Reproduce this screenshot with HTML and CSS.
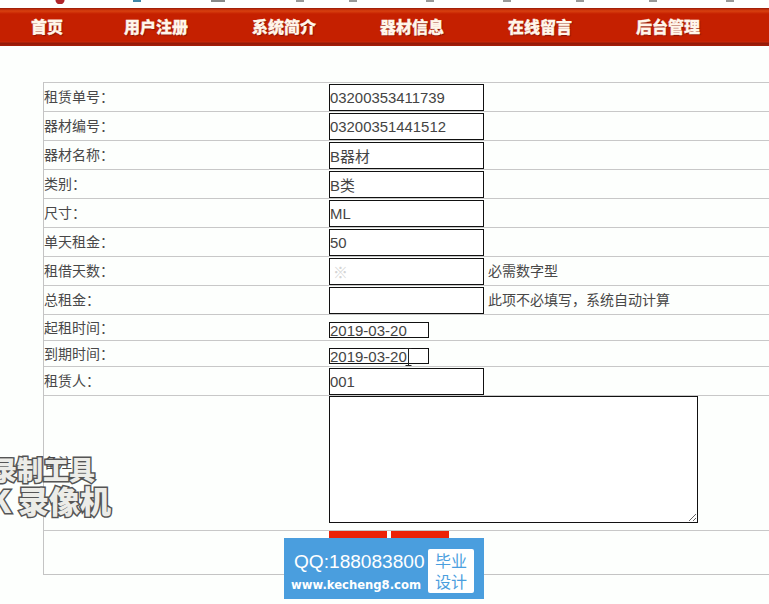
FILE: index.html
```html
<!DOCTYPE html>
<html lang="zh-CN">
<head>
<meta charset="utf-8">
<title>租赁信息</title>
<link rel="stylesheet" href="styles.css">
</head>
<body>
<div class="top-strip"></div>
<nav class="nav">
  <a class="nav-item nav-first">首页</a>
  <a class="nav-item">用户注册</a>
  <a class="nav-item">系统简介</a>
  <a class="nav-item">器材信息</a>
  <a class="nav-item">在线留言</a>
  <a class="nav-item">后台管理</a>
</nav>
<main class="content">
  <table class="form-table">
    <tr><td class="label">租赁单号：</td><td class="field"><input class="box" value="03200353411739"></td></tr>
    <tr><td class="label">器材编号：</td><td class="field"><input class="box" value="03200351441512"></td></tr>
    <tr><td class="label">器材名称：</td><td class="field"><input class="box" value="B器材"></td></tr>
    <tr><td class="label">类别：</td><td class="field"><input class="box" value="B类"></td></tr>
    <tr><td class="label">尺寸：</td><td class="field"><input class="box" value="ML"></td></tr>
    <tr><td class="label">单天租金：</td><td class="field"><input class="box" value="50"></td></tr>
    <tr><td class="label">租借天数：</td><td class="field"><div class="with-hint"><input class="box ghost" value="※"><span class="hint">必需数字型</span></div></td></tr>
    <tr><td class="label">总租金：</td><td class="field"><div class="with-hint"><input class="box"><span class="hint">此项不必填写，系统自动计算</span></div></td></tr>
    <tr><td class="label">起租时间：</td><td class="field date-cell"><input class="date" value="2019-03-20"></td></tr>
    <tr><td class="label">到期时间：</td><td class="field date-cell"><input class="date" value="2019-03-20"></td></tr>
    <tr><td class="label">租赁人：</td><td class="field"><input class="box" value="001"></td></tr>
    <tr><td class="label">备注：</td><td class="field note-cell"><textarea class="note"></textarea></td></tr>
    <tr><td class="label"></td><td class="field actions"><button class="btn">提交</button><button class="btn">重置</button></td></tr>
  </table>
</main>
<svg class="ibeam" width="7" height="18" viewBox="0 0 7 18"><path d="M0.5 0.5H6.5M3.5 0.5V17.5M0.5 17.5H6.5" fill="none" stroke="#222" stroke-width="1"/></svg>
<div class="recorder"><span>录制工具</span><span class="recorder-2">K 录像机</span></div>
<aside class="promo">
  <div class="promo-text">
    <div class="promo-qq">QQ:188083800</div>
    <div class="promo-url">www.kecheng8.com</div>
  </div>
  <div class="promo-badge">毕业<br>设计</div>
</aside>
</body>
</html>
```
FILE: styles.css
```css
* { box-sizing: border-box; }
html, body { margin: 0; height: 100%; overflow: hidden; }
body {
  background: #fdfffd;
  color: #333;
  font-family: "Noto Sans CJK SC", "Liberation Sans", sans-serif;
  font-size: 14px;
  position: relative;
}
.top-strip {
  height: 8px;
  background-color: #fff;
  background-repeat: no-repeat;
  background-image:
    radial-gradient(circle at 50% 0, #b0242a 0 4px, transparent 5px),
    linear-gradient(#3f86a8, #3f86a8),
    linear-gradient(#888, #888), linear-gradient(#999, #999), linear-gradient(#999, #999),
    linear-gradient(#999, #999), linear-gradient(#999, #999), linear-gradient(#999, #999),
    linear-gradient(#999, #999), linear-gradient(#999, #999);
  background-size:
    10px 4px, 8px 2px,
    14px 2px, 8px 2px, 8px 2px,
    8px 2px, 8px 2px, 8px 2px,
    8px 2px, 8px 2px;
  background-position:
    55px 0, 133px 0,
    211px 0, 296px 0, 349px 0,
    426px 0, 503px 0, 576px 0,
    649px 0, 726px 0;
}
.nav {
  height: 38px;
  display: flex;
  align-items: center;
  padding-left: 31px;
  padding-bottom: 3px;
  background: linear-gradient(#8f1a08 0, #b8260a 1px, #d8400f 3px, #c52000 6px, #c52000 33px, #c82a0c 34px, #8f1a08 35px, #a81d08 38px);
}
.nav-item {
  width: 128px;
  flex: none;
  color: #fff6ea;
  font-size: 16px;
  font-weight: 900;
  line-height: 20px;
  -webkit-text-stroke: 0.3px #fff6ea;
  text-shadow: 1px 1px 1px rgba(90, 10, 0, .6);
}
.nav-first { width: 93px; }
.content { padding: 36px 0 0 43px; }
.form-table {
  width: 726px;
  border-collapse: separate;
  border-spacing: 0;
  border-left: 1px solid #c4c4c4;
  border-bottom: 1px solid #c4c4c4;
}
.form-table td { border-top: 1px solid #c8c8c8; padding: 0; }
.label {
  width: 285px;
  padding-bottom: 2px !important;
  font-family: "Noto Sans CJK JP", "Noto Sans CJK SC", sans-serif;
  font-size: 14px;
  line-height: 20px;
  color: #484848;
  vertical-align: middle;
}
.field { padding: 1px 0 0 !important; vertical-align: top; }
.box, .date, .note {
  display: block;
  border: 1px solid #111;
  border-radius: 0;
  background: #fff;
  color: #444;
  padding: 0;
  margin: 0;
  outline: none;
  font-family: "Liberation Sans", sans-serif;
}
.box { width: 155px; height: 27px; font-size: 14.9px; }
.ghost { color: #d4d4d4; padding-left: 3px; }
.date { width: 100px; height: 16px; font-size: 15px; padding: 0; }
.date-cell { padding: 7px 0 2px !important; }
.note { width: 369px; height: 127px; }
.note-cell { padding: 0 0 7px !important; }
.with-hint { display: flex; align-items: center; gap: 4px; }
.hint { font-size: 14px; line-height: 20px; color: #484848; margin-top: -3px; }
.actions { display: flex; gap: 4px; height: 44px; padding: 0 !important; }
.btn {
  width: 58px;
  height: 30px;
  border: 0;
  background: #ec2208;
  color: #fff;
  font-family: inherit;
  font-size: 13px;
  padding: 0;
}
.ibeam { position: absolute; left: 405px; top: 348px; }
.recorder {
  position: absolute;
  left: -9px;
  top: 453px;
  display: flex;
  flex-direction: column;
  color: #ecece8;
  font-weight: 900;
  font-size: 26px;
  line-height: 31px;
  -webkit-text-stroke: 3px #555;
  paint-order: stroke fill;
  white-space: nowrap;
}
.recorder-2 { margin-left: -2px; font-size: 31px; line-height: 32px; }
.promo {
  position: absolute;
  left: 284px;
  top: 538px;
  width: 200px;
  height: 61px;
  background: #4a9ede;
  color: #fff;
  display: flex;
  align-items: flex-start;
  padding: 11px 0 0 7px;
}
.promo-text { width: 137px; flex: none; }
.promo-qq { font-family: "Liberation Sans", sans-serif; font-size: 19.1px; line-height: 26px; padding-left: 3px; white-space: nowrap; }
.promo-url { font-family: "DejaVu Sans", sans-serif; font-weight: 700; font-size: 11.6px; line-height: 20px; white-space: nowrap; }
.promo-badge {
  width: 46px;
  height: 44px;
  background: #fff;
  border-radius: 2px;
  color: #4a9ede;
  font-size: 16px;
  line-height: 21px;
  text-align: center;
  padding-top: 1px;
}
```
